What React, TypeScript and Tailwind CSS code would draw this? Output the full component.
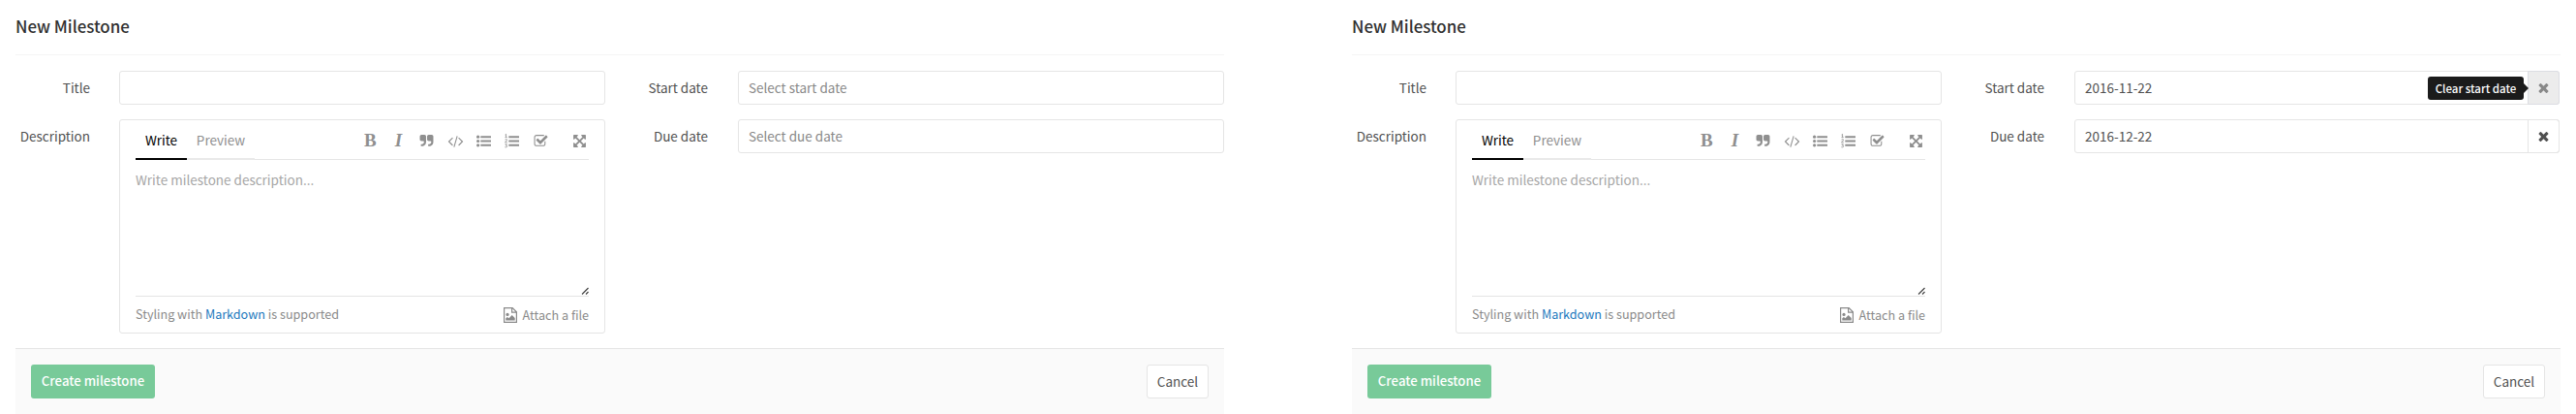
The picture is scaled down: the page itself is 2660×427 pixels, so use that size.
import type { ReactNode } from 'react';

type IconProps = { size: number; className?: string; children: ReactNode };

function Icon({ size, className = '', children }: IconProps) {
  return (
    <svg width={size} height={size} viewBox="0 0 1792 1792" fill="currentColor" overflow="visible" className={`shrink-0 ${className}`} aria-hidden="true">
      {children}
    </svg>
  );
}

const QuoteIcon = () => (
  <Icon size={15}>
    <path d="M832 320v704q0 104-40.5 198.5t-109.5 163.5-163.5 109.5-198.5 40.5h-64q-26 0-45-19t-19-45v-128q0-26 19-45t45-19h64q106 0 181-75t75-181v-32q0-40-28-68t-68-28h-224q-80 0-136-56t-56-136v-384q0-80 56-136t136-56h384q80 0 136 56t56 136zM1728 320v704q0 104-40.5 198.5t-109.5 163.5-163.5 109.5-198.5 40.5h-64q-26 0-45-19t-19-45v-128q0-26 19-45t45-19h64q106 0 181-75t75-181v-32q0-40-28-68t-68-28h-224q-80 0-136-56t-56-136v-384q0-80 56-136t136-56h384q80 0 136 56t56 136z" />
  </Icon>
);

const CodeIcon = () => (
  <Icon size={15}>
    <path d="M553 1399l-50 50q-10 10-23 10t-23-10l-466-466q-10-10-10-23t10-23l466-466q10-10 23-10t23 10l50 50q10 10 10 23t-10 23l-393 393 393 393q10 10 10 23t-10 23zM1144 332l-373 1291q-4 13-15.5 19.5t-23.5 2.5l-62-17q-13-4-19.5-15.5t-2.5-24.5l373-1291q4-13 15.5-19.5t23.5-2.5l62 17q13 4 19.5 15.5t2.5 24.5zM1801 983l-466 466q-10 10-23 10t-23-10l-50-50q-10-10-10-23t10-23l393-393-393-393q-10-10-10-23t10-23l50-50q10-10 23-10t23 10l466 466q10 10 10 23t-10 23z" />
  </Icon>
);

const Bars = () => (
  <>
    <rect x="512" y="256" width="1280" height="256" rx="32" />
    <rect x="512" y="768" width="1280" height="256" rx="32" />
    <rect x="512" y="1280" width="1280" height="256" rx="32" />
  </>
);

const BulletListIcon = () => (
  <Icon size={15}>
    <circle cx="192" cy="384" r="192" />
    <circle cx="192" cy="896" r="192" />
    <circle cx="192" cy="1408" r="192" />
    <Bars />
  </Icon>
);

const NumberListIcon = () => (
  <Icon size={15}>
    <g fill="none" stroke="currentColor" strokeWidth="100">
      <path d="M70 130L190 50V430M60 430H320" />
      <path d="M60 730Q190 610 290 700Q350 800 60 1060H330" />
      <path d="M60 1300H290L180 1440Q320 1450 300 1580Q240 1740 50 1640" />
    </g>
    <Bars />
  </Icon>
);

const TaskIcon = () => (
  <Icon size={15}>
    <path d="M1472 930v318q0 119-84.5 203.5t-203.5 84.5h-832q-119 0-203.5-84.5t-84.5-203.5v-832q0-119 84.5-203.5t203.5-84.5h832q63 0 117 25 15 7 18 23 3 17-9 29l-49 49q-10 10-23 10-3 0-9-2-23-6-45-6h-832q-66 0-113 47t-47 113v832q0 66 47 113t113 47h832q66 0 113-47t47-113v-254q0-13 9-22l64-64q10-10 23-10 6 0 12 3 20 8 20 29zM1703 441l-814 814q-24 24-57 24t-57-24l-430-430q-24-24-24-57t24-57l110-110q24-24 57-24t57 24l263 263 647-647q24-24 57-24t57 24l110 110q24 24 24 57t-24 57z" />
  </Icon>
);

const ExpandIcon = () => (
  <Icon size={15}>
    <path d="M1411 541l-355 355 355 355 144-144q29-31 70-14 39 17 39 59v448q0 26-19 45t-45 19h-448q-42 0-59-40-17-39 14-69l144-144-355-355-355 355 144 144q31 30 14 69-17 40-59 40h-448q-26 0-45-19t-19-45v-448q0-42 40-59 39-17 69 14l144 144 355-355-355-355-144 144q-19 19-45 19-12 0-24-5-40-17-40-59v-448q0-26 19-45t45-19h448q42 0 59 40 17 39-14 69l-144 144 355 355 355-355-144-144q-31-30-14-69 17-40 59-40h448q26 0 45 19t19 45v448q0 42-39 59-13 5-25 5-26 0-45-19z" />
  </Icon>
);

const CloseIcon = () => (
  <Icon size={15}>
    <path d="M1490 1322q0 40-28 68l-136 136q-28 28-68 28t-68-28l-294-294-294 294q-28 28-68 28t-68-28l-136-136q-28-28-28-68t28-68l294-294-294-294q-28-28-28-68t28-68l136-136q28-28 68-28t68 28l294 294 294-294q28-28 68-28t68 28l136 136q28 28 28 68t-28 68l-294 294 294 294q28 28 28 68z" />
  </Icon>
);

const FileImageIcon = () => (
  <svg width="14" height="16" viewBox="0 0 14 16" fill="none" stroke="currentColor" strokeWidth="1.2" className="shrink-0" aria-hidden="true">
    <path d="M.6.6h8.6l4.2 4.2v10.6H.6zM8.6.6v4.6h4.8" />
    <circle cx="4" cy="7.4" r="1.6" fill="currentColor" stroke="none" />
    <path d="M2.3 13.6v-2.4l1.6-1.1 1.6 1.1 3.2-3.1 3 3v2.5z" fill="currentColor" stroke="none" />
  </svg>
);

const tool = 'flex w-[29.3px] justify-center';

function Editor() {
  return (
    <div className="flex h-[221px] w-[502px] flex-col rounded-[3px] border border-[#e5e5e5] px-4">
      <div className="flex h-[41px] shrink-0 items-stretch border-b border-[#e5e5e5]">
        <button className="-mb-px h-[41px] w-[53px] border-b-2 border-black pt-[1px] text-black">Write</button>
        <button className="-mb-px h-[41px] w-[70px] border-b-2 border-[#e9e9e9] pt-[1px] text-[#8f8f8f]">Preview</button>
        <div className="ml-auto -mr-[5px] flex items-center pt-[2px] text-[#8f8f8f]">
          <button className={`${tool} font-['Liberation_Serif'] text-[19px] leading-4 font-bold`}>B</button>
          <button className={`${tool} font-['Liberation_Serif'] text-[19px] leading-4 font-bold italic`}>I</button>
          <button className={tool}><QuoteIcon /></button>
          <button className={tool}><CodeIcon /></button>
          <button className={tool}><BulletListIcon /></button>
          <button className={tool}><NumberListIcon /></button>
          <button className={tool}><TaskIcon /></button>
          <button className={`${tool} ml-[11px]`}><ExpandIcon /></button>
        </div>
      </div>
      <div className="flex h-[141px] shrink-0 justify-between border-b border-[#e5e5e5] pt-[10px] text-[#a6a6a6]">
        <span>Write milestone description...</span>
        <svg width="8" height="8" viewBox="0 0 8 8" stroke="#444" strokeWidth="1.2" className="mb-px self-end" aria-hidden="true">
          <path d="M1 7.5L7.5 1M5 7.5L7.5 5" />
        </svg>
      </div>
      <div className="flex flex-1 items-center justify-between text-[12.6px] text-[#8a8a8a]">
        <span className="pb-[2px]">Styling with <a className="text-[#1b78bd]">Markdown</a> is supported</span>
        <span className="flex items-center gap-[6px]"><FileImageIcon />Attach a file</span>
      </div>
    </div>
  );
}

type DateFieldProps = { label: string; placeholder: string; value?: string; tooltip?: string };

function DateField({ label, placeholder, value, tooltip }: DateFieldProps) {
  return (
    <div className="flex h-[35px]">
      <label className="w-[90px] pt-[7px] text-right">{label}</label>
      <div className={`ml-[31px] flex rounded-[3px] border border-[#e5e5e5] ${value ? 'w-[501px]' : 'w-[502px]'}`}>
        <span className={`flex-1 pt-[6px] pl-[10px] ${value ? '' : 'text-[#888]'}`}>{value ?? placeholder}</span>
        {value && (
          <button className={tooltip ? 'relative -m-px flex w-[33px] items-center justify-center rounded-r-[3px] border border-[#dcdde3] bg-[#ececec] text-[#888]' : 'relative -m-px flex w-[33px] items-center justify-center rounded-r-[3px] border border-[#e5e5e5]'}>
            <CloseIcon />
            {tooltip && (
              <span className="absolute top-[5px] right-[31px] flex items-center">
                <span className="flex h-6 w-[99px] items-center justify-center rounded-[3px] bg-[#1b1b1b] text-[11.5px] font-medium whitespace-nowrap text-white">{tooltip}</span>
                <span className="border-y-[5px] border-l-[5px] border-y-transparent border-l-[#1b1b1b]" />
              </span>
            )}
          </button>
        )}
      </div>
    </div>
  );
}

function MilestoneForm({ start, due, tooltip }: { start?: string; due?: string; tooltip?: string }) {
  return (
    <section className="w-[1248px]">
      <h1 className="h-[57px] border-b border-[#f5f5f5] pt-[16px] text-[16.9px] leading-[22px] font-medium text-[#303030]">New Milestone</h1>
      <div className="flex h-[302px] pt-4">
        <div className="flex flex-col gap-[15px]">
          <div className="flex h-[35px]">
            <label className="w-[77px] pt-[7px] text-right">Title</label>
            <div className="ml-[30px] w-[502px] rounded-[3px] border border-[#e5e5e5]" />
          </div>
          <div className="flex">
            <label className="w-[77px] pt-[7px] text-right">Description</label>
            <div className="ml-[30px]"><Editor /></div>
          </div>
        </div>
        <div className="ml-4 flex flex-col gap-[15px]">
          <DateField label="Start date" placeholder="Select start date" value={start} tooltip={tooltip} />
          <DateField label="Due date" placeholder="Select due date" value={due} />
        </div>
      </div>
      <footer className="flex h-[68px] items-start justify-between border-t border-[#e5e5e5] bg-[#fafafa] px-4 pt-4">
        <button className="h-[35px] w-32 rounded-[3px] bg-[#78ca99] pb-[2px] text-[13.2px] font-medium text-white">Create milestone</button>
        <button className="h-[35px] w-16 rounded-[3px] border border-[#e5e5e5] bg-white pb-[2px]">Cancel</button>
      </footer>
    </section>
  );
}

export default function App() {
  return (
    <main className="flex h-[427px] w-[2660px] gap-[132px] overflow-hidden bg-white pl-4 font-['Noto_Sans_CJK_SC',sans-serif] text-[13.5px] leading-5 text-[#505050]">
      <MilestoneForm />
      <MilestoneForm start="2016-11-22" due="2016-12-22" tooltip="Clear start date" />
    </main>
  );
}
